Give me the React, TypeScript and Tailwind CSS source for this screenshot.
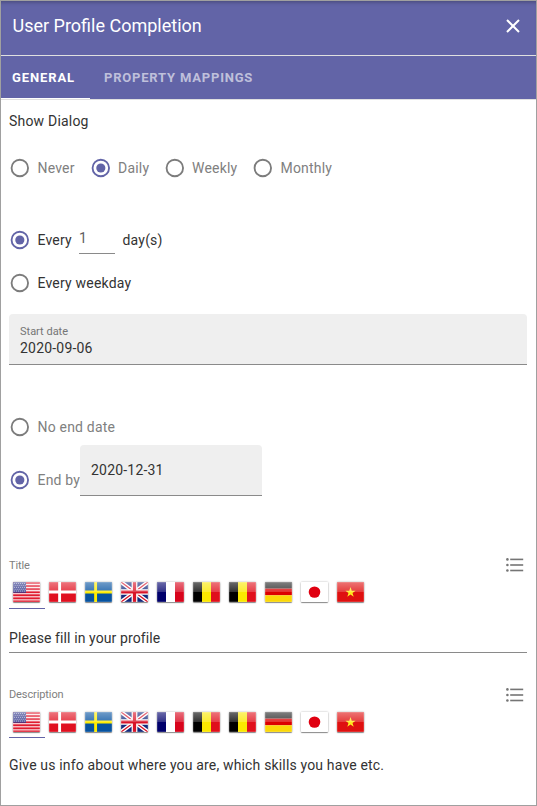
import React from "react";

const FONT = "font-['Roboto','Liberation_Sans',sans-serif]";

function Radio({ checked = false }: { checked?: boolean }) {
  const color = checked ? "#6264a7" : "#7c7c7c";
  return (
    <svg width="22" height="22" viewBox="0.2 0 24 24" className="shrink-0">
      <circle cx="12" cy="12" r="9" fill="none" stroke={color} strokeWidth="2" />
      {checked && <circle cx="12" cy="12" r="5" fill={color} />}
    </svg>
  );
}

function RadioOption({ label, checked, className = "" }: { label: string; checked?: boolean; className?: string }) {
  return (
    <label className={`flex items-center gap-[6.5px] ${className}`}>
      <Radio checked={checked} />
      <span className="whitespace-nowrap">{label}</span>
    </label>
  );
}

function ListIcon() {
  return (
    <svg width="18" height="14" viewBox="0 0 18 14" fill="#757575">
      {[1.4, 7, 12.5].map((y) => (
        <g key={y}>
          <circle cx="1.4" cy={y} r="1.3" />
          <rect x="4.2" y={y - 0.8} width="13" height="1.6" />
        </g>
      ))}
    </svg>
  );
}

type FlagName = "us" | "dk" | "se" | "gb" | "fr" | "be" | "de" | "jp" | "vn";
const FLAGS: FlagName[] = ["us", "dk", "se", "gb", "fr", "be", "be", "de", "jp", "vn"];

function Tricolor({ colors }: { colors: string[] }) {
  return (
    <>
      {colors.map((c, i) => (
        <rect key={c} x={(i * 28) / 3} y="0" width={28 / 3 + 0.1} height="21" fill={c} />
      ))}
    </>
  );
}

function FlagArt({ name }: { name: FlagName }) {
  switch (name) {
    case "us":
      return (
        <>
          <rect width="28" height="21" fill="#fbe4e6" />
          {[0, 1, 2, 3, 4, 5, 6].map((i) => (
            <rect key={i} y={i * 3.23} width="28" height="2" fill="#e01c30" />
          ))}
          <rect width="13.5" height="11.3" fill="#343a8c" />
          {[0, 1, 2, 3, 4].map((r) =>
            [0, 1, 2, 3, 4, 5].map((c) => (
              <circle key={`${r}-${c}`} cx={1.4 + c * 2.1 + (r % 2) * 0.8} cy={1.5 + r * 2} r="0.48" fill="#fff" />
            ))
          )}
        </>
      );
    case "dk":
      return (
        <>
          <rect width="28" height="21" fill="#e01020" />
          <path d="M0 10.5H28M11 0V21" stroke="#fff" strokeWidth="3" />
        </>
      );
    case "se":
      return (
        <>
          <rect width="28" height="21" fill="#0753a0" />
          <path d="M0 10.5H28M11 0V21" stroke="#ffec00" strokeWidth="3" />
        </>
      );
    case "gb":
      return (
        <>
          <rect width="28" height="21" fill="#142a7c" />
          <path d="M0 0L28 21M28 0L0 21" stroke="#fff" strokeWidth="4.2" />
          <path d="M0 0L28 21M28 0L0 21" stroke="#d81428" strokeWidth="1.4" />
          <path d="M0 10.5H28M14 0V21" stroke="#fff" strokeWidth="6" />
          <path d="M0 10.5H28M14 0V21" stroke="#d81428" strokeWidth="3.4" />
        </>
      );
    case "fr":
      return <Tricolor colors={["#00006b", "#ffffff", "#d8041c"]} />;
    case "be":
      return <Tricolor colors={["#000000", "#fbe800", "#e0101c"]} />;
    case "de":
      return (
        <>
          <rect width="28" height="7" fill="#222" />
          <rect y="7" width="28" height="7" fill="#dc0000" />
          <rect y="14" width="28" height="7" fill="#fbd808" />
        </>
      );
    case "jp":
      return (
        <>
          <rect width="28" height="21" fill="#fff" />
          <circle cx="14" cy="10.6" r="6" fill="#e00010" />
        </>
      );
    case "vn":
      return (
        <>
          <rect width="28" height="21" fill="#df1010" />
          <path
            d="M14 5.2L15.3 9.1H19.3L16.1 11.5L17.3 15.4L14 13L10.7 15.4L11.9 11.5L8.7 9.1H12.7Z"
            fill="#ffe820"
          />
        </>
      );
  }
}

function Flag({ name, id }: { name: FlagName; id: string }) {
  const gloss = name === "jp" ? 0 : 0.42;
  return (
    <svg
      width="27"
      height="20"
      viewBox="0 0 28 21"
      preserveAspectRatio="none"
      className="rounded-[1px] shadow-[0_1px_1px_rgba(0,0,0,0.4),0_0_2px_rgba(0,0,0,0.35)]"
    >
      <defs>
        <linearGradient id={id} x1="0" y1="0" x2="0" y2="1">
          <stop offset="0" stopColor="#fff" stopOpacity={gloss} />
          <stop offset="1" stopColor="#fff" stopOpacity={gloss * 0.45} />
        </linearGradient>
      </defs>
      <FlagArt name={name} />
      <rect width="28" height="10.5" fill={`url(#${id})`} />
      <rect x="0.5" y="0.5" width="27" height="20" fill="none" stroke="#fff" strokeOpacity="0.15" />
    </svg>
  );
}

function FlagTabs({ prefix, className }: { prefix: string; className: string }) {
  return (
    <div className={`flex ${className}`}>
      {FLAGS.map((name, i) => (
        <div
          key={i}
          className={`flex w-9 shrink-0 items-start border-b pt-[3px] pl-1 ${i === 0 ? "border-[#6264a7]" : "border-transparent"}`}
        >
          <Flag name={name} id={`${prefix}-${i}`} />
        </div>
      ))}
    </div>
  );
}

export default function App() {
  return (
    <div className={`flex h-[806px] w-[537px] flex-col overflow-hidden border border-[#a0a0a0] bg-white text-sm text-[#333] ${FONT}`}>
      <header className="flex h-[55px] shrink-0 items-center justify-between border-b border-[#e0e0e0] bg-[#6264a7] pr-[15px] pl-[11.5px] pb-1 text-white shadow-[inset_0_4px_4px_-3px_rgba(0,0,0,0.3)]">
        <h1 className="text-[18px]">User Profile Completion</h1>
        <svg width="16" height="16" viewBox="0 0 16 16" stroke="#fff" strokeWidth="2">
          <path d="M2 2L14 14M14 2L2 14" />
        </svg>
      </header>
      <nav className="flex h-11 shrink-0 border-b border-[#e0e0e0] bg-[#6264a7] text-[13px] font-bold tracking-[0.8px] text-white">
        <div className="flex w-[89px] items-center border-b border-white pt-[3px] pl-[11px] tracking-[0.9px]">GENERAL</div>
        <div className="flex items-center pt-[2px] pl-[14px] text-white/60">PROPERTY MAPPINGS</div>
      </nav>

      <main className="flex flex-col pr-[9px] pl-2 tracking-[0.2px]">
        <div className="flex h-[42px] items-center">Show Dialog</div>
        <div className="flex h-[52px] items-center text-[#808080]">
          <RadioOption label="Never" className="w-[80.5px]" />
          <RadioOption label="Daily" checked className="w-[74px]" />
          <RadioOption label="Weekly" className="w-[88.5px]" />
          <RadioOption label="Monthly" />
        </div>

        <div className="mt-6 flex h-11 items-center">
          <RadioOption label="Every" checked className="w-[70px]" />
          <div className="flex h-7 w-9 items-start border-b border-[#8a8a8a] pt-[2px] text-[#606060]">1</div>
          <span className="ml-[7.5px]">day(s)</span>
        </div>
        <RadioOption label="Every weekday" className="h-[42px]" />

        <div className="mt-[10px] flex h-[51px] flex-col rounded-t border-b border-[#8a8a8a] bg-[#efefef] pt-[9px] pl-[11px]">
          <span className="pt-px text-[11px] leading-[15px] tracking-[0px] text-[#757575]">Start date</span>
          <span className="leading-[18px]">2020-09-06</span>
        </div>

        <RadioOption label="No end date" className="mt-11 h-9 text-[#808080]" />
        <div className="flex h-[51px]">
          <RadioOption label="End by" checked className="w-[71px] pt-[19px] text-[#808080]" />
          <div className="flex w-[182px] items-center rounded-t border-b border-[#8a8a8a] bg-[#efefef] pl-[11px]">2020-12-31</div>
        </div>

        <div className="mt-[59px] flex h-5 items-center justify-between pr-[3px] text-[11px] tracking-[-0.1px] text-[#808080]">
          <span className="pt-px">Title</span>
          <ListIcon />
        </div>
        <FlagTabs prefix="title" className="mt-1 h-[30px]" />
        <div className="flex h-11 items-center border-b border-[#8a8a8a] pt-[15px] tracking-[0.1px]">Please fill in your profile</div>

        <div className="mt-8 flex h-5 items-center justify-between pr-[3px] text-[11px] tracking-[-0.1px] text-[#808080]">
          <span className="-mt-px">Description</span>
          <ListIcon />
        </div>
        <FlagTabs prefix="description" className="mt-1 h-[29px]" />
        <div className="flex h-11 items-center pt-[10px] tracking-[0.165px]">
          Give us info about where you are, which skills you have etc.
        </div>
      </main>
    </div>
  );
}
